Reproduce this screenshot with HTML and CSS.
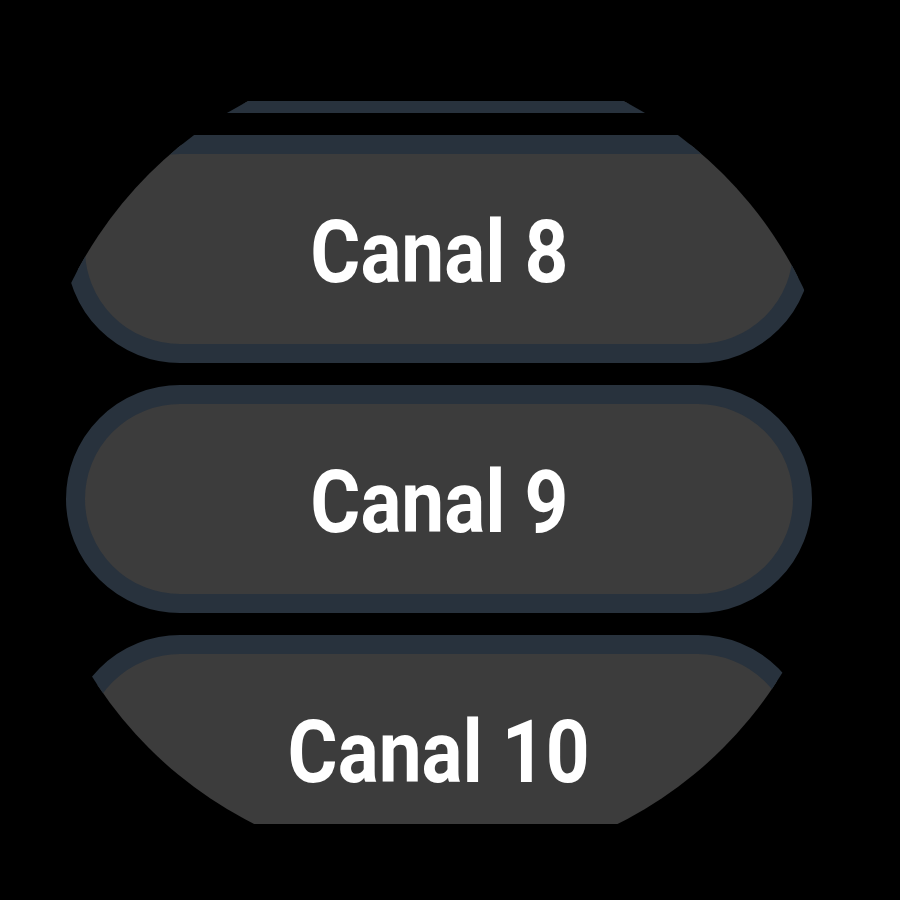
FILE: index.html
```html
<!DOCTYPE html>
<html>
<head>
    <title>Canales</title>
    <link rel="stylesheet" href="styles.css">
</head>
<body>
    <div class="watch">
        <div class="viewport">
            <div class="channel-list">
                <div class="chip"></div>
                <div class="chip"><span class="chip-label">Canal 8</span></div>
                <div class="chip"><span class="chip-label">Canal 9</span></div>
                <div class="chip"><span class="chip-label">Canal 10</span></div>
            </div>
        </div>
    </div>
</body>
</html>
```

FILE: styles.css
```css
html, body {
    margin: 0;
    background: #000;
}
.watch {
    width: 900px;
    height: 900px;
    background: #000;
    padding-top: 101px;
    box-sizing: border-box;
}
.viewport {
    height: 723px;
    overflow: hidden;
    clip-path: circle(406px at 436px 360px);
}
.channel-list {
    display: flex;
    flex-direction: column;
    gap: 22px;
    padding-left: 66px;
    margin-top: -216px;
}
.chip {
    width: 746px;
    height: 228px;
    box-sizing: border-box;
    border: 19px solid #28323d;
    border-radius: 114px;
    background: #3c3c3c;
    padding-top: 6px;
    display: flex;
    align-items: center;
    justify-content: center;
}
.chip-label {
    display: inline-block;
    font-family: Roboto, 'Liberation Sans', sans-serif;
    font-weight: 700;
    font-size: 88px;
    line-height: 1;
    color: #fff;
    transform: scaleX(0.87);
    white-space: nowrap;
}
```
